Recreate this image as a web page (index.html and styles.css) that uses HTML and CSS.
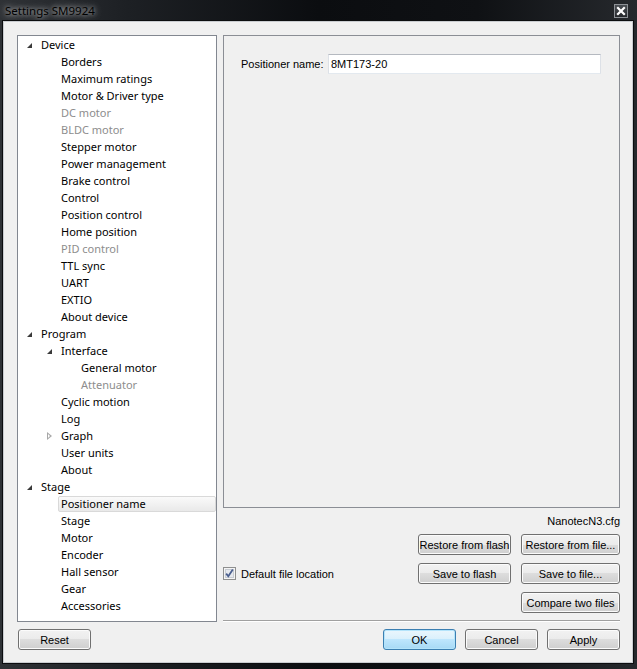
FILE: index.html
```html
<!DOCTYPE html>
<html lang="en">
<head>
    <meta charset="UTF-8">
    <meta name="viewport" content="width=device-width, initial-scale=1.0">
    <title>Settings SM9924</title>
    <link rel="stylesheet" href="styles.css">
</head>
<body>
    <div class="window">
        <div class="titlebar">
            <span class="title">Settings SM9924</span>
            <span class="close">
                <svg width="12" height="12" viewBox="0 0 12 12">
                    <path d="M3 3 L9 9 M9 3 L3 9" stroke="#fff" stroke-width="2.2" stroke-linecap="square"/>
                </svg>
            </span>
        </div>

        <div class="client">
            <div class="main">
                <ul class="tree">
                    <li class="row lv0"><span class="twisty open"></span><span class="label">Device</span></li>
                    <li class="row lv1"><span class="twisty"></span><span class="label">Borders</span></li>
                    <li class="row lv1"><span class="twisty"></span><span class="label">Maximum ratings</span></li>
                    <li class="row lv1"><span class="twisty"></span><span class="label">Motor &amp; Driver type</span></li>
                    <li class="row lv1 off"><span class="twisty"></span><span class="label">DC motor</span></li>
                    <li class="row lv1 off"><span class="twisty"></span><span class="label">BLDC motor</span></li>
                    <li class="row lv1"><span class="twisty"></span><span class="label">Stepper motor</span></li>
                    <li class="row lv1"><span class="twisty"></span><span class="label">Power management</span></li>
                    <li class="row lv1"><span class="twisty"></span><span class="label">Brake control</span></li>
                    <li class="row lv1"><span class="twisty"></span><span class="label">Control</span></li>
                    <li class="row lv1"><span class="twisty"></span><span class="label">Position control</span></li>
                    <li class="row lv1"><span class="twisty"></span><span class="label">Home position</span></li>
                    <li class="row lv1 off"><span class="twisty"></span><span class="label">PID control</span></li>
                    <li class="row lv1"><span class="twisty"></span><span class="label">TTL sync</span></li>
                    <li class="row lv1"><span class="twisty"></span><span class="label">UART</span></li>
                    <li class="row lv1"><span class="twisty"></span><span class="label">EXTIO</span></li>
                    <li class="row lv1"><span class="twisty"></span><span class="label">About device</span></li>
                    <li class="row lv0"><span class="twisty open"></span><span class="label">Program</span></li>
                    <li class="row lv1"><span class="twisty open"></span><span class="label">Interface</span></li>
                    <li class="row lv2"><span class="twisty"></span><span class="label">General motor</span></li>
                    <li class="row lv2 off"><span class="twisty"></span><span class="label">Attenuator</span></li>
                    <li class="row lv1"><span class="twisty"></span><span class="label">Cyclic motion</span></li>
                    <li class="row lv1"><span class="twisty"></span><span class="label">Log</span></li>
                    <li class="row lv1"><span class="twisty shut"></span><span class="label">Graph</span></li>
                    <li class="row lv1"><span class="twisty"></span><span class="label">User units</span></li>
                    <li class="row lv1"><span class="twisty"></span><span class="label">About</span></li>
                    <li class="row lv0"><span class="twisty open"></span><span class="label">Stage</span></li>
                    <li class="row lv1 selected"><span class="twisty"></span><span class="label">Positioner name</span></li>
                    <li class="row lv1"><span class="twisty"></span><span class="label">Stage</span></li>
                    <li class="row lv1"><span class="twisty"></span><span class="label">Motor</span></li>
                    <li class="row lv1"><span class="twisty"></span><span class="label">Encoder</span></li>
                    <li class="row lv1"><span class="twisty"></span><span class="label">Hall sensor</span></li>
                    <li class="row lv1"><span class="twisty"></span><span class="label">Gear</span></li>
                    <li class="row lv1"><span class="twisty"></span><span class="label">Accessories</span></li>
                </ul>

                <div class="side">
                    <div class="page">
                        <div class="field">
                            <label for="posName">Positioner name:</label>
                            <input id="posName" type="text" value="8MT173-20">
                        </div>
                    </div>

                    <div class="file-name">NanotecN3.cfg</div>

                    <div class="file-actions">
                        <button class="btn r1 c2">Restore from flash</button>
                        <button class="btn r1 c3">Restore from file...</button>
                        <label class="check r2 c1">
                            <span class="box">
                                <svg width="13" height="13" viewBox="0 0 13 13">
                                    <rect x="0.5" y="0.5" width="12" height="12" fill="#f4f4f4" stroke="#8e8f8f"/>
                                    <rect x="2.5" y="2.5" width="8" height="8" fill="#e6e9ee" stroke="#c7ccd3"/>
                                    <path d="M3.2 6.6 L5.3 9.2 L9.8 2.6" fill="none" stroke="#4a5f8f" stroke-width="1.8"/>
                                </svg>
                            </span>
                            Default file location
                        </label>
                        <button class="btn r2 c2">Save to flash</button>
                        <button class="btn r2 c3">Save to file...</button>
                        <button class="btn r3 c3">Compare two files</button>
                    </div>

                    <div class="sep"></div>
                </div>

                <div class="left-buttons">
                    <button class="btn wide">Reset</button>
                </div>

                <div class="dialog-buttons">
                    <button class="btn wide default">OK</button>
                    <button class="btn wide">Cancel</button>
                    <button class="btn wide">Apply</button>
                </div>
            </div>
        </div>
    </div>
</body>
</html>
```

FILE: styles.css
```css
body {
    margin: 0;
    padding: 0;
    background-color: #1a1c1f;
    font-family: "Liberation Sans", Arial, sans-serif;
}

.window {
    width: 637px;
    height: 669px;
    display: flex;
    flex-direction: column;
    background: linear-gradient(to right, #2f3236 0%, #1d2024 20%, #0b0d10 50%, #0f1114 75%, #26292d 100%);
}

/* title bar */
.titlebar {
    height: 21px;
    display: flex;
    justify-content: space-between;
    align-items: center;
    padding: 0 9px 0 5px;
}

.title {
    font-family: "Noto Sans", sans-serif;
    font-size: 11.5px;
    color: #000;
    text-shadow: 0 0 4px rgba(255,255,255,0.6), 0 0 9px rgba(255,255,255,0.45), 0 0 14px rgba(255,255,255,0.3);
}

.close {
    width: 12px;
    height: 12px;
    border: 1px solid #8d9196;
    background: linear-gradient(#4a4e53, #24272b);
    display: flex;
    margin-top: 1px;
}

/* dialog body */
.client {
    margin: 0 4px 0 3px;
    height: 642px;
    box-sizing: border-box;
    border: 1px solid #c9ccd0;
    box-shadow: 0 0 0 1px #0c0d0f;
    background-color: #f0f0f0;
    padding: 13px 0 0 13px;
}

.main {
    display: grid;
    grid-template-columns: 200px 397px;
    grid-template-rows: 587px 21px;
    column-gap: 6px;
    row-gap: 7px;
}

/* tree */
.tree {
    list-style: none;
    margin: 0;
    padding: 1px 0 0;
    border: 1px solid #828790;
    background-color: #fff;
    overflow: hidden;
    font-family: "Noto Sans", sans-serif;
    font-size: 11px;
    color: #000;
}

.row {
    height: 17px;
    display: flex;
    align-items: flex-start;
}

.row .label {
    line-height: 16px;
    white-space: nowrap;
}

.twisty {
    width: 20px;
    height: 16px;
    flex: none;
    position: relative;
}

.lv0 .twisty { margin-left: 3px; }
.lv1 .twisty { margin-left: 23px; }
.lv2 .twisty { margin-left: 43px; }

.twisty.open::before {
    content: "";
    position: absolute;
    left: 6px;
    top: 6px;
    width: 0;
    height: 0;
    border-left: 5px solid transparent;
    border-bottom: 5px solid #3a3a3a;
}

.twisty.shut::before {
    content: "";
    position: absolute;
    left: 6px;
    top: 4px;
    width: 0;
    height: 0;
    border-top: 4px solid transparent;
    border-bottom: 4px solid transparent;
    border-left: 5px solid #a8a8a8;
}

.twisty.shut::after {
    content: "";
    position: absolute;
    left: 7px;
    top: 6px;
    width: 0;
    height: 0;
    border-top: 2px solid transparent;
    border-bottom: 2px solid transparent;
    border-left: 2px solid #fff;
}

.row.off .label {
    color: #8d8d8d;
}

.row.selected .label {
    flex: 1;
    margin-left: -3px;
    margin-right: 0;
    padding-left: 2px;
    height: 14px;
    line-height: 14px;
    border: 1px solid #d9d9d9;
    border-radius: 2px;
    background: linear-gradient(#fafafa, #e9e9e9);
}

/* right column */
.side {
    display: flex;
    flex-direction: column;
}

.page {
    flex: 1;
    border: 1px solid #8b8e95;
    padding: 18px 0 0 17px;
    font-size: 11px;
}

.field {
    display: flex;
    align-items: center;
}

.field label {
    width: 87px;
    color: #000;
}

.field input {
    width: 273px;
    height: 20px;
    box-sizing: border-box;
    margin: 0;
    padding: 0 2px;
    border: 1px solid;
    border-color: #b5b9c0 #dde1e7 #e3e9ef #dde1e7;
    font-family: "Liberation Sans", Arial, sans-serif;
    font-size: 11px;
    color: #000;
    background-color: #fff;
}

.file-name {
    padding-top: 7px;
    height: 13px;
    line-height: 13px;
    margin-bottom: 6px;
    text-align: right;
    font-size: 11px;
}

.file-actions {
    display: grid;
    grid-template-columns: 1fr 93px 99px;
    grid-template-rows: 21px 21px 21px;
    column-gap: 10px;
    row-gap: 8px;
}

.r1 { grid-row: 1; }
.r2 { grid-row: 2; }
.r3 { grid-row: 3; }
.c1 { grid-column: 1; }
.c2 { grid-column: 2; }
.c3 { grid-column: 3; }

.check {
    display: flex;
    align-items: center;
    gap: 5px;
    font-size: 11px;
    color: #000;
}

.box {
    display: flex;
}

.sep {
    margin-top: 7px;
    border-top: 1px solid #a0a0a0;
    border-bottom: 1px solid #fff;
}

/* buttons */
.btn {
    margin: 0;
    padding: 0;
    height: 21px;
    box-sizing: border-box;
    border: 1px solid #707070;
    border-radius: 3px;
    background: linear-gradient(#f2f2f2 0%, #ebebeb 50%, #dddddd 50%, #cfcfcf 100%);
    box-shadow: inset 0 0 0 1px #fbfbfb;
    font-family: "Liberation Sans", Arial, sans-serif;
    font-size: 11px;
    color: #000;
    white-space: nowrap;
}

.btn.wide {
    width: 73px;
}

.btn.default {
    border-color: #3c7fb1;
    background: linear-gradient(#eaf6fd 0%, #d9f0fc 50%, #bee6fd 50%, #a7d9f5 100%);
    box-shadow: inset 0 0 0 1px #b4e4fb;
}

.left-buttons {
    display: flex;
    padding-left: 1px;
}

.dialog-buttons {
    display: flex;
    justify-content: flex-end;
    gap: 9px;
}
```
